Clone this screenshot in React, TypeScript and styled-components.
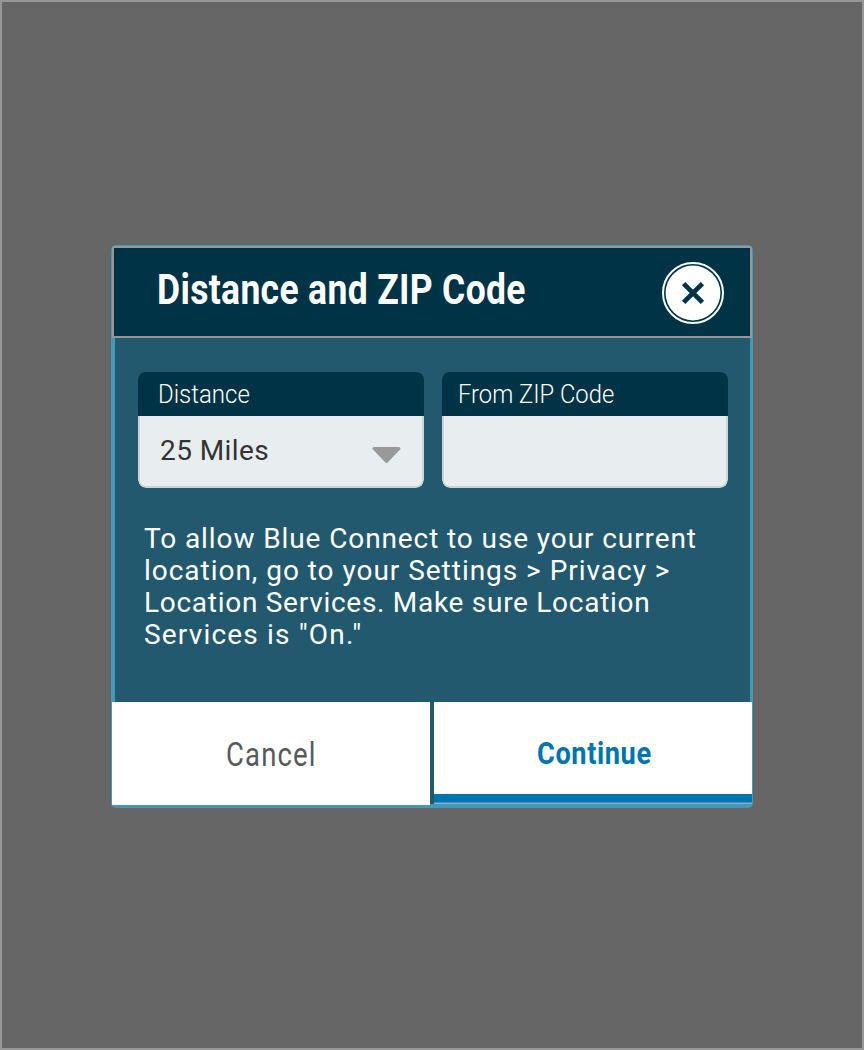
import React from "react";
import styled, { createGlobalStyle } from "styled-components";

const GlobalStyle = createGlobalStyle`
  *, *::before, *::after { box-sizing: border-box; }
  body { margin: 0; background: #666666; }
  button { font: inherit; margin: 0; padding: 0; border: 0; cursor: pointer; }
`;

const Backdrop = styled.main`
  width: 864px;
  height: 1050px;
  padding: 243px 0 0 109px;
  background: #666666;
  border: 2px solid #979797;
  font-family: Roboto, "Liberation Sans", sans-serif;
`;

const Dialog = styled.section`
  display: flex;
  flex-direction: column;
  width: 642px;
  height: 563px;
  padding: 1px;
  background: #4298b5;
  border-radius: 5px;
`;

const Header = styled.header`
  display: flex;
  justify-content: space-between;
  height: 92px;
  padding: 14px 26px 0 43px;
  background: #003346;
  border: 2px solid #979797;
  border-radius: 2px 2px 0 0;
`;

const Text = styled.span<{ $scale?: number; $spacing?: number }>`
  display: block;
  width: max-content;
  white-space: nowrap;
  letter-spacing: ${(p) => p.$spacing ?? 0}px;
  transform: scaleX(${(p) => p.$scale ?? 1});
  transform-origin: left center;
`;

const Title = styled.h1`
  width: 380px;
  margin: 4px 0 0;
  color: #ffffff;
  font-size: 42px;
  font-weight: 700;
  line-height: 48px;
`;

const CloseButton = styled.button`
  width: 62px;
  height: 62px;
  background: none;
  svg { display: block; }
`;

const Body = styled.div`
  height: 364px;
  margin: 0 2px 0 3px;
  padding: 34px 22px 0 23px;
  background: #23596f;
`;

const Fields = styled.div`
  display: grid;
  grid-template-columns: 286px 286px;
  column-gap: 18px;
`;

const Field = styled.div`
  height: 116px;
  overflow: hidden;
  border-radius: 8px;
  background: #003346;
`;

const FieldLabel = styled.div<{ $inset: number }>`
  height: 44px;
  padding: 8px 0 0 ${(p) => p.$inset}px;
  color: #ffffff;
  font-size: 25px;
  font-weight: 300;
  line-height: 30px;
`;

const FieldValue = styled.div`
  display: flex;
  justify-content: space-between;
  height: 72px;
  padding: 18px 21.5px 0 20px;
  background: #e8edf0;
  border: solid #d0d3d6;
  border-width: 0 2px 2px;
  border-radius: 0 0 8px 8px;
  color: #333333;
  font-size: 28px;
  line-height: 34px;
  svg { display: block; margin-top: 12px; }
`;

const Message = styled.p`
  margin: 35px 0 0 6px;
  color: #ffffff;
  font-size: 28px;
  line-height: 32px;
`;

const Footer = styled.footer`
  display: grid;
  grid-template-columns: 317.5px 318px;
  column-gap: 4.5px;
  height: 102px;
  background: #23596f;
`;

const Cancel = styled.button`
  display: flex;
  justify-content: flex-start;
  height: 103px;
  padding: 32px 0 0 114px;
  background: #ffffff;
  color: #58595b;
  font-size: 34px;
  line-height: 40px;
`;

const Continue = styled.button`
  display: flex;
  height: 102px;
  padding: 31px 0 0 103px;
  background: linear-gradient(#ffffff 92px, #0073b1 92px, #0073b1 100px, #438fbf 100px, #438fbf 101px, #83b5c9 101px);
  color: #0073b1;
  font-size: 32px;
  font-weight: 700;
  line-height: 40px;
`;

const lines = [
  { text: "To allow Blue Connect to use your current", spacing: 0.9 },
  { text: "location, go to your Settings > Privacy >", spacing: 0.97 },
  { text: "Location Services. Make sure Location", spacing: 0.72 },
  { text: 'Services is "On."', spacing: 1.17 },
];

export default function App() {
  return (
    <>
      <GlobalStyle />
      <Backdrop>
        <Dialog role="dialog" aria-labelledby="dialog-title">
          <Header>
            <Title id="dialog-title">
              <Text $scale={0.845} $spacing={0.4}>Distance and ZIP Code</Text>
            </Title>
            <CloseButton aria-label="Close">
              <svg width="62" height="62" viewBox="0 0 62 62">
                <circle cx="31" cy="31" r="30" fill="#003346" stroke="#ffffff" strokeWidth="2" />
                <circle cx="31" cy="31" r="27.4" fill="#ffffff" />
                <path d="M21.6 21.6 40.4 40.4M40.4 21.6 21.6 40.4" stroke="#003346" strokeWidth="4.8" />
              </svg>
            </CloseButton>
          </Header>
          <Body>
            <Fields>
              <Field>
                <FieldLabel $inset={20}>
                  <Text $scale={0.96}>Distance</Text>
                </FieldLabel>
                <FieldValue>
                  <Text $spacing={0.42}>25 Miles</Text>
                  <svg width="29" height="18" viewBox="0 0 29 18">
                    <path d="M2 2.5H27L14.5 15.5Z" fill="#999999" stroke="#999999" strokeWidth="3" strokeLinejoin="round" />
                  </svg>
                </FieldValue>
              </Field>
              <Field>
                <FieldLabel $inset={16}>
                  <Text $scale={0.95}>From ZIP Code</Text>
                </FieldLabel>
                <FieldValue />
              </Field>
            </Fields>
            <Message>
              {lines.map((line) => (
                <Text key={line.text} $spacing={line.spacing}>{line.text}</Text>
              ))}
            </Message>
          </Body>
          <Footer>
            <Cancel>
              <Text $scale={0.81} $spacing={1.4}>Cancel</Text>
            </Cancel>
            <Continue>
              <Text $scale={0.85} $spacing={0.7}>Continue</Text>
            </Continue>
          </Footer>
        </Dialog>
      </Backdrop>
    </>
  );
}
